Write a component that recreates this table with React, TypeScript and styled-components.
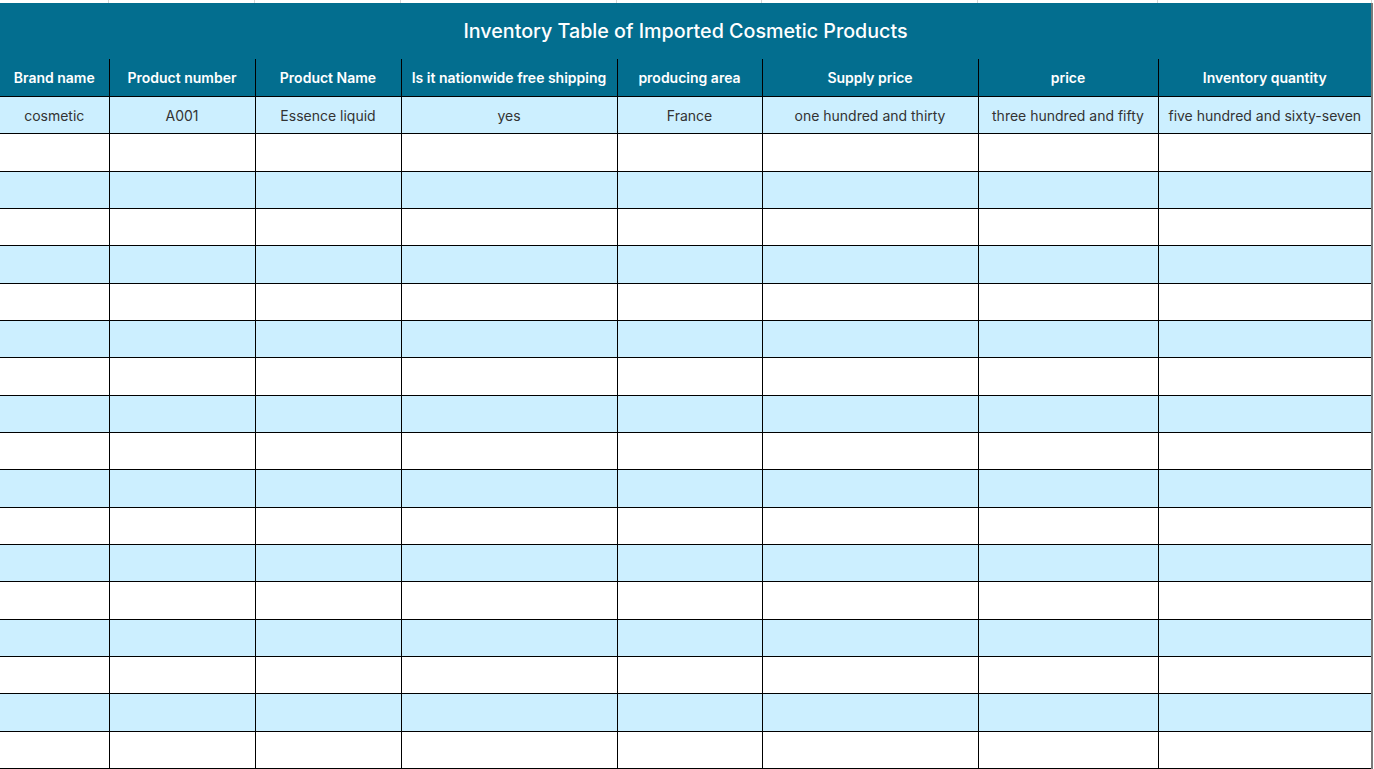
import React from "react";
import styled, { createGlobalStyle } from "styled-components";

const GlobalStyle = createGlobalStyle`
  html, body { margin: 0; padding: 0; background: #ffffff; }
  body { font-family: Inter, "Noto Sans", "Liberation Sans", sans-serif; overflow: hidden; }
`;

const widths = [109, 146, 146, 216, 145, 216, 180, 214];
const headers = [
  "Brand name",
  "Product number",
  "Product Name",
  "Is it nationwide free shipping",
  "producing area",
  "Supply price",
  "price",
  "Inventory quantity",
];
const firstRow = [
  "cosmetic",
  "A001",
  "Essence liquid",
  "yes",
  "France",
  "one hundred and thirty",
  "three hundred and fifty",
  "five hundred and sixty-seven",
];
const ROWS = 18;

const Sheet = styled.div`
  width: 1374px;
  display: flex;
  flex-direction: column;
`;

const TopStrip = styled.div`
  display: grid;
  grid-template-columns: ${widths.map((w) => `${w}px`).join(" ")} 2px;
  height: 3px;
`;

const StripCell = styled.div`
  border-right: 1px solid #d6d6d6;
`;

const Table = styled.table`
  border-collapse: collapse;
  table-layout: fixed;
  width: 1373px;
  border-right: 2px solid #7a7a7a;
`;

const TitleCell = styled.th`
  height: 56px;
  padding: 0;
  background: #036e8f;
  color: #ffffff;
  font-size: 19.7px;
  font-weight: 500;
  text-align: center;
`;

const HeadCell = styled.th`
  height: 37px;
  padding: 0;
  background: #036e8f;
  color: #ffffff;
  font-size: 14px;
  font-weight: 600;
  text-align: center;
  border: 1.5px solid #000;
  border-top: none;
  white-space: nowrap;
  &:first-child { border-left: none; }
`;

const Row = styled.tr<{ $shade: boolean }>`
  height: 37.33px;
  background: ${(p) => (p.$shade ? "#ccefff" : "#ffffff")};
`;

const Cell = styled.td`
  padding: 0;
  border: 1.5px solid #000;
  font-size: 14px;
  color: #333333;
  text-align: center;
  white-space: nowrap;
  &:first-child { border-left: none; }
`;

export default function App() {
  return (
    <>
      <GlobalStyle />
      <Sheet>
        <TopStrip>
          {widths.map((w, i) => (
            <StripCell key={i} />
          ))}
        </TopStrip>
        <Table>
          <colgroup>
            {widths.map((w, i) => (
              <col key={i} style={{ width: w }} />
            ))}
          </colgroup>
          <thead>
            <tr>
              <TitleCell colSpan={8}>Inventory Table of Imported Cosmetic Products</TitleCell>
            </tr>
            <tr>
              {headers.map((h) => (
                <HeadCell key={h}>{h}</HeadCell>
              ))}
            </tr>
          </thead>
          <tbody>
            {Array.from({ length: ROWS }).map((_, r) => (
              <Row key={r} $shade={r % 2 === 0}>
                {widths.map((_, c) => (
                  <Cell key={c}>{r === 0 ? firstRow[c] : ""}</Cell>
                ))}
              </Row>
            ))}
          </tbody>
        </Table>
      </Sheet>
    </>
  );
}
